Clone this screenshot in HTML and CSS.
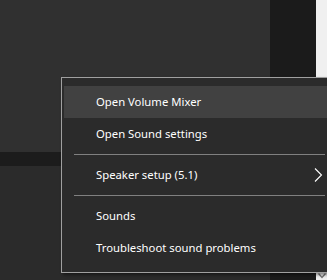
FILE: index.html
```html
<!DOCTYPE html>
<html lang="en">
<head>
    <meta charset="UTF-8">
    <title>Sound menu</title>
    <link rel="stylesheet" href="styles.css">
</head>
<body>
    <div class="desk">
        <div class="pane">
            <div class="pane-top"></div>
            <div class="pane-band"></div>
            <div class="pane-rest"></div>
        </div>
        <div class="rail"></div>
        <div class="edge">
            <svg class="edge-arrow" width="8" height="6" viewBox="0 0 8 6">
                <polyline points="0.5,0.5 4,4.5 7.5,0.5" fill="none" stroke="#777" stroke-width="1.4"/>
            </svg>
        </div>
    </div>

    <div class="menu">
        <div class="item active">Open Volume Mixer</div>
        <div class="item">Open Sound settings</div>
        <div class="sep"></div>
        <div class="item has-sub">
            Speaker setup (5.1)
            <svg class="sub-arrow" width="9" height="14" viewBox="0 0 9 14">
                <polyline points="1,0.5 7.5,7 1,13.5" fill="none" stroke="#fff" stroke-width="1.1"/>
            </svg>
        </div>
        <div class="sep"></div>
        <div class="item">Sounds</div>
        <div class="item">Troubleshoot sound problems</div>
    </div>
</body>
</html>
```
FILE: styles.css
```css
html, body {
    margin: 0;
    height: 100%;
    background: #2b2b2b;
    overflow: hidden;
}
body {
    font-family: "Noto Sans", "Open Sans", sans-serif;
}
.desk {
    display: grid;
    grid-template-columns: 270px 46px 1fr;
    height: 280px;
}
.pane {
    display: flex;
    flex-direction: column;
}
.pane-top {
    height: 152px;
    background: #303030;
}
.pane-band {
    height: 14px;
    background: #1c1c1c;
}
.pane-rest {
    flex: 1;
    background: #2b2b2b;
}
.rail {
    background: #1b1b1b;
}
.edge {
    background: #f0f0f0;
    display: flex;
    align-items: flex-end;
    justify-content: center;
}
.edge-arrow {
    margin-bottom: 1px;
}
.menu {
    position: absolute;
    left: 61px;
    top: 77px;
    width: 264px;
    padding: 8px 0 8px 2px;
    background: #2b2b2b;
    border: 1px solid #a0a0a0;
    box-shadow: 2px 2px 3px rgba(0,0,0,0.45);
    color: #fff;
    font-size: 11.3px;
}
.item {
    position: relative;
    height: 32px;
    line-height: 32px;
    padding-left: 32px;
    white-space: nowrap;
}
.item.active {
    background: #414141;
}
.sep {
    height: 1px;
    margin: 4px 3px 4px 10px;
    background: #808080;
}
.sub-arrow {
    position: absolute;
    right: 5px;
    top: 9px;
}
```
